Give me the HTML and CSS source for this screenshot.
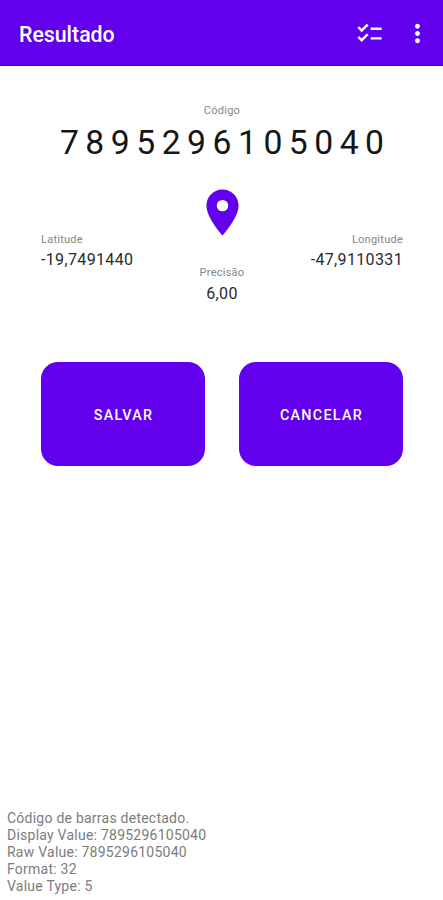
FILE: index.html
```html
<!DOCTYPE html>
<html lang="pt-BR">
<head>
<meta charset="utf-8">
<title>Resultado</title>
<link rel="stylesheet" href="styles.css">
</head>
<body>
<header class="appbar">
  <h1 class="title">Resultado</h1>
  <svg class="icon" viewBox="0 0 24 24"><path d="M22 7h-9v2h9V7zm0 8h-9v2h9v-2zM5.54 11L2 7.46l1.41-1.41 2.12 2.12 4.24-4.24 1.41 1.41L5.54 11zm0 8L2 15.46l1.41-1.41 2.12 2.12 4.24-4.24 1.41 1.41L5.54 19z"/></svg>
  <svg class="icon more" viewBox="0 0 24 24"><path d="M12 8c1.1 0 2-.9 2-2s-.9-2-2-2-2 .9-2 2 .9 2 2 2zm0 2c-1.1 0-2 .9-2 2s.9 2 2 2 2-.9 2-2-.9-2-2-2zm0 6c-1.1 0-2 .9-2 2s.9 2 2 2 2-.9 2-2-.9-2-2-2z"/></svg>
</header>
<main class="content">
  <section class="code">
    <div class="label">Código</div>
    <div class="number">7895296105040</div>
  </section>
  <section class="location">
    <div class="coord">
      <div class="label">Latitude</div>
      <div class="value">-19,7491440</div>
    </div>
    <div class="precision">
      <svg class="pin" viewBox="0 0 24 24"><path d="M12 2C8.13 2 5 5.13 5 9c0 5.25 7 13 7 13s7-7.75 7-13c0-3.87-3.13-7-7-7zm0 9.5a2.5 2.5 0 0 1 0-5 2.5 2.5 0 0 1 0 5z"/></svg>
      <div class="label">Precisão</div>
      <div class="value">6,00</div>
    </div>
    <div class="coord end">
      <div class="label">Longitude</div>
      <div class="value">-47,9110331</div>
    </div>
  </section>
  <div class="actions">
    <button class="button">SALVAR</button>
    <button class="button">CANCELAR</button>
  </div>
</main>
<footer class="log">
  <div>Código de barras detectado.</div>
  <div>Display Value: 7895296105040</div>
  <div>Raw Value: 7895296105040</div>
  <div>Format: 32</div>
  <div>Value Type: 5</div>
</footer>
</body>
</html>
```
FILE: styles.css
```css
* { box-sizing: border-box; }
body {
  margin: 0;
  height: 900px;
  display: flex;
  flex-direction: column;
  overflow: hidden;
  background: #fff;
  color: #2a2a2a;
  font-family: Roboto, sans-serif;
}
.appbar {
  height: 66px;
  flex: none;
  display: flex;
  align-items: center;
  padding: 2px 11px 0 19px;
  background: #6200ee;
  border-bottom: 1px solid #4c00c8;
  color: #fff;
}
.title {
  flex: 1;
  margin: 0;
  padding-top: 2px;
  font-size: 21.3px;
  font-weight: 500;
}
.icon { width: 29px; height: 29px; fill: #fff; }
.more { margin-left: 19px; }
.content { flex: 1; padding: 38px 40px 0 41px; }
.code { text-align: center; }
.label {
  font-size: 11px;
  line-height: 14px;
  letter-spacing: 0.25px;
  color: #858585;
}
.number {
  margin-top: 5px;
  font-size: 33.7px;
  line-height: 40px;
  letter-spacing: 6.5px;
  margin-right: -6.5px;
  color: #151515;
  white-space: nowrap;
}
.location {
  display: grid;
  grid-template-columns: 1fr auto 1fr;
  margin-top: 22px;
}
.coord { padding-top: 48px; }
.end { text-align: right; }
.value {
  margin-top: 1px;
  font-size: 16px;
  line-height: 24px;
  letter-spacing: 0.35px;
}
.precision { text-align: center; }
.precision .value { margin-top: 2px; }
.pin { display: block; width: 55px; height: 55px; margin: 0 auto 26px; fill: #6200ee; }
.actions {
  display: grid;
  grid-template-columns: 1fr 1fr;
  gap: 34px;
  margin-top: 56px;
}
.button {
  height: 104px;
  padding: 1px 0 0 1px;
  border: 0;
  border-radius: 17px;
  background: #6200ee;
  color: #fff;
  font: 500 14.3px Roboto, sans-serif;
  letter-spacing: 1.3px;
}
.log {
  padding: 0 7px 5px;
  font-size: 14px;
  line-height: 17px;
  letter-spacing: 0.24px;
  color: #7c7c7c;
}
```
